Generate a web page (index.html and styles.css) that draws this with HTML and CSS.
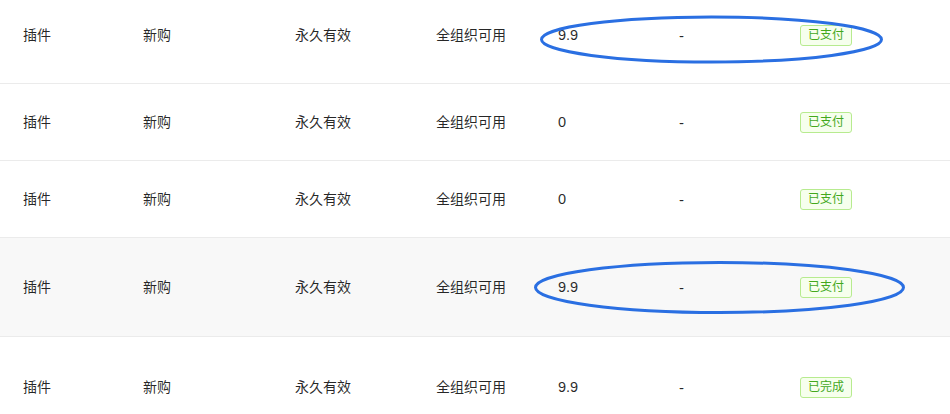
FILE: index.html
```html
<!DOCTYPE html>
<html lang="zh">
<head>
<meta charset="utf-8">
<link rel="stylesheet" href="styles.css">
</head>
<body>
<div class="table">
  <div class="row first">
    <div class="cell">插件</div><div class="cell">新购</div><div class="cell">永久有效</div><div class="cell">全组织可用</div><div class="cell num">9.9</div><div class="cell num dash">-</div><div class="cell"><span class="tag">已支付</span></div>
  </div>
  <div class="row short">
    <div class="cell">插件</div><div class="cell">新购</div><div class="cell">永久有效</div><div class="cell">全组织可用</div><div class="cell num">0</div><div class="cell num dash">-</div><div class="cell"><span class="tag">已支付</span></div>
  </div>
  <div class="row short">
    <div class="cell">插件</div><div class="cell">新购</div><div class="cell">永久有效</div><div class="cell">全组织可用</div><div class="cell num">0</div><div class="cell num dash">-</div><div class="cell"><span class="tag">已支付</span></div>
  </div>
  <div class="row tall hover">
    <div class="cell">插件</div><div class="cell">新购</div><div class="cell">永久有效</div><div class="cell">全组织可用</div><div class="cell num">9.9</div><div class="cell num dash">-</div><div class="cell"><span class="tag">已支付</span></div>
  </div>
  <div class="row tall">
    <div class="cell">插件</div><div class="cell">新购</div><div class="cell">永久有效</div><div class="cell">全组织可用</div><div class="cell num">9.9</div><div class="cell num dash">-</div><div class="cell"><span class="tag">已完成</span></div>
  </div>
  <svg class="marks" width="950" height="414" viewBox="0 0 950 414">
    <ellipse cx="711.5" cy="39.5" rx="170" ry="22.5" fill="none" stroke="#2a6fe2" stroke-width="3"/>
    <ellipse cx="719.5" cy="287.5" rx="184" ry="25" fill="none" stroke="#2a6fe2" stroke-width="3"/>
  </svg>
</div>
</body>
</html>
```
FILE: styles.css
```css
html, body {
  margin: 0;
  padding: 0;
  background: #ffffff;
}
body {
  font-family: "Liberation Sans", "Noto Sans CJK SC", sans-serif;
  font-size: 14px;
  color: rgba(0, 0, 0, 0.85);
  overflow: hidden;
}
.table {
  position: relative;
  width: 950px;
}
.row {
  display: grid;
  grid-template-columns: 120px 152px 141px 122px 121px 121px 173px;
  align-items: center;
  border-bottom: 1px solid #ebebeb;
  box-sizing: border-box;
}
.row.first {
  height: 84px;
  padding-bottom: 13px;
}
.row.short {
  height: 77px;
}
.row.tall {
  height: 99px;
}
.row.hover {
  background: #f8f8f8;
}
.row:last-of-type {
  height: 101px;
}
.cell {
  padding-left: 23px;
  line-height: 22px;
  white-space: nowrap;
}
.cell.num {
  font-size: 14.5px;
}
.cell.dash {
  font-size: 15px;
  padding-top: 2px;
}
.tag {
  display: inline-block;
  box-sizing: border-box;
  height: 21px;
  line-height: 19px;
  padding: 0 7px;
  font-size: 12px;
  color: #43a81c;
  background: #f6ffed;
  border: 1px solid #b7eb8f;
  border-radius: 3px;
  vertical-align: middle;
}
.marks {
  position: absolute;
  left: 0;
  top: 0;
  pointer-events: none;
}
```
